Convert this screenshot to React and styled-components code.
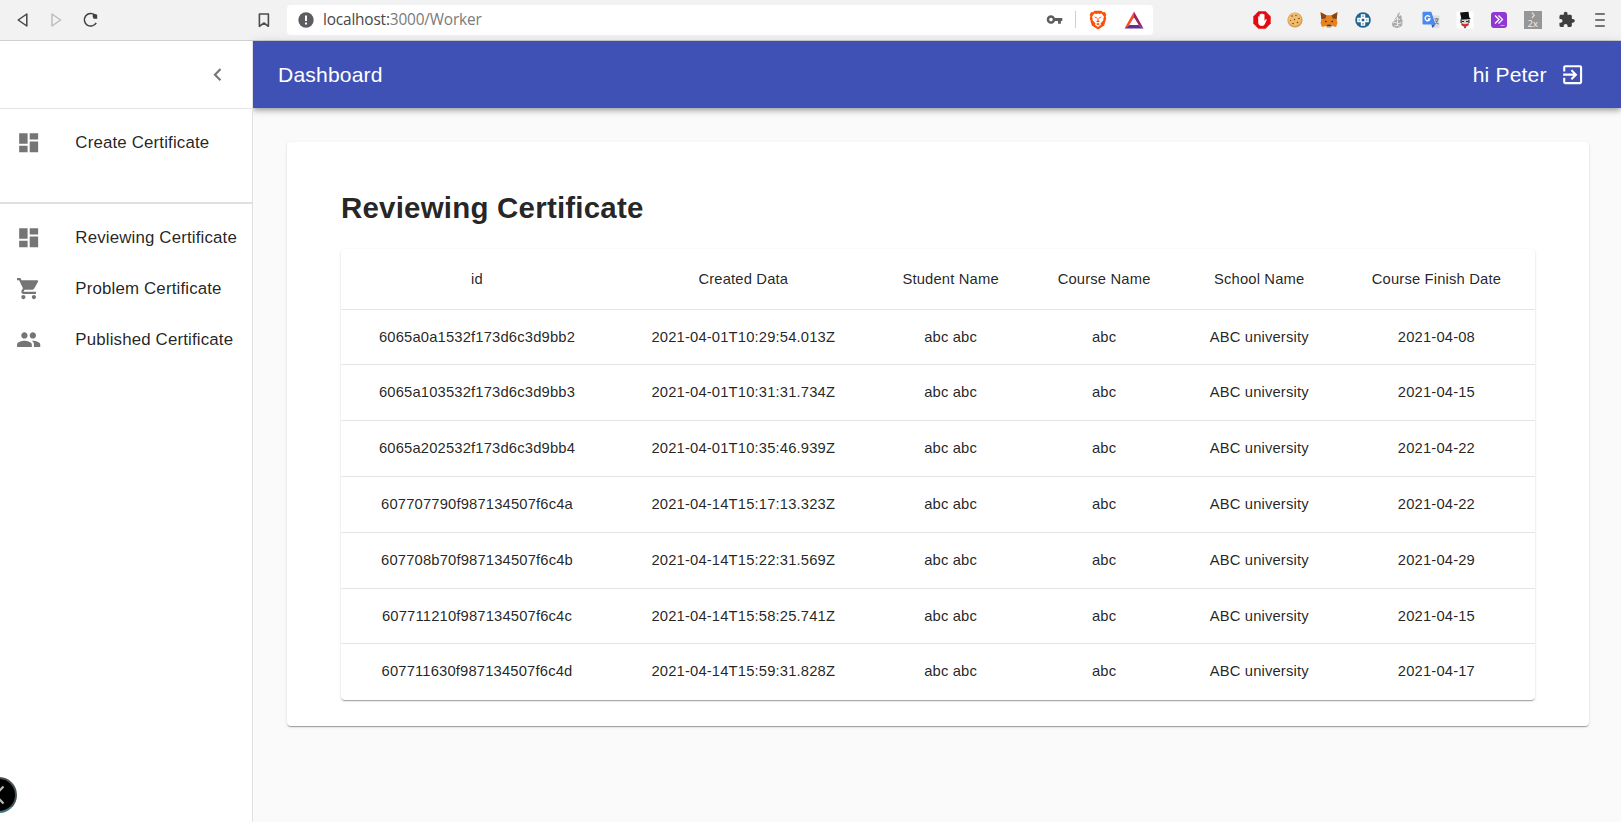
import React from "react";
import styled, { createGlobalStyle } from "styled-components";

const Global = createGlobalStyle`
  * { box-sizing: border-box; }
  html, body, #root { height: 100%; }
  body {
    margin: 0;
    overflow: hidden;
    background: #fafafa;
    color: rgba(0, 0, 0, 0.87);
    font-family: "Liberation Sans", Arial, sans-serif;
  }
`;

const Page = styled.div`
  display: flex;
  flex-direction: column;
  height: 100vh;
`;

const BrowserBar = styled.header`
  display: flex;
  align-items: center;
  flex: none;
  height: 41px;
  padding: 0 12px 1px 14px;
  background: #f2f2f2;
  border-bottom: 1px solid #cfd1d3;
`;

const NavButtons = styled.div`
  display: flex;
  gap: 16px;
`;

const Icon = styled.svg`
  display: block;
  flex: none;
  width: ${(p) => p.$size || 18}px;
  height: ${(p) => p.$size || 18}px;
  fill: ${(p) => p.$color || "currentColor"};
`;

const BookmarkSlot = styled.div`
  margin-left: 155px;
`;

const AddressBar = styled.div`
  display: flex;
  align-items: center;
  width: 866px;
  height: 30px;
  margin-left: 14px;
  padding: 0 9px 0 10px;
  background: #fff;
  border-radius: 4px;
`;

const Url = styled.span`
  flex: 1;
  margin-left: 8px;
  font: 15.4px/20px "Open Sans", "Noto Sans", sans-serif;
  letter-spacing: -0.17px;
  color: #7b7b7b;
`;

const Host = styled.span`
  color: #474747;
`;

const BarDivider = styled.span`
  width: 1px;
  height: 17px;
  margin: 0 12px 0 12px;
  background: #cfcfcf;
`;

const ShieldSlot = styled.div`
  margin-right: 16px;
`;

const Extensions = styled.div`
  display: flex;
  align-items: center;
  gap: 15.9px;
  margin-left: auto;
`;

const Body = styled.div`
  display: flex;
  flex: 1;
  min-height: 0;
`;

const Sidebar = styled.nav`
  position: relative;
  flex: none;
  width: 253px;
  background: #fff;
  border-right: 1px solid #e0e0e0;
`;

const SidebarHead = styled.div`
  display: flex;
  align-items: center;
  justify-content: flex-end;
  height: 68px;
  padding-right: 22px;
  border-bottom: 1px solid #e3e3e3;
  color: #757575;
`;

const NavList = styled.ul`
  margin: 0;
  padding: 8.5px 0;
  height: ${(p) => p.$height || "auto"};
  list-style: none;
  border-bottom: ${(p) => (p.$ruled ? "2px solid #e0e0e0" : "0")};
`;

const NavItem = styled.li`
  display: flex;
  align-items: center;
  height: 50.75px;
  padding-left: 16px;
  color: #757575;
`;

const NavLabel = styled.span`
  margin-left: 34px;
  padding-top: 1px;
  font-size: 16.87px;
  letter-spacing: 0.00938em;
  white-space: nowrap;
  color: rgba(0, 0, 0, 0.87);
`;

const FloatingToggle = styled.div`
  position: absolute;
  left: -19px;
  bottom: 9px;
  display: flex;
  align-items: center;
  justify-content: center;
  width: 36px;
  height: 36px;
  border: 2px solid;
  border-color: #4b4d50 #48545a #3f7683 #333;
  border-radius: 50%;
  background: #000;
  color: #b5b5b5;
`;

const Main = styled.main`
  display: flex;
  flex-direction: column;
  flex: 1;
  min-width: 0;
`;

const AppBar = styled.div`
  display: flex;
  align-items: center;
  flex: none;
  height: 67px;
  padding: 0 36px 0 25px;
  background: #3f51b5;
  color: #fff;
  box-shadow: 0 2px 4px -1px rgba(0, 0, 0, 0.2), 0 4px 5px 0 rgba(0, 0, 0, 0.14),
    0 1px 10px 0 rgba(0, 0, 0, 0.12);
`;

const BarText = styled.span`
  flex: ${(p) => (p.$grow ? 1 : "none")};
  font-size: 21.1px;
  letter-spacing: 0.0075em;
`;

const LogoutSlot = styled.div`
  margin-left: 13px;
`;

const Card = styled.section`
  margin: 34px 32px 0 34px;
  padding: 44px 54px 25.5px;
  background: #fff;
  border-radius: 4px;
  box-shadow: 0 2px 1px -1px rgba(0, 0, 0, 0.2), 0 1px 1px 0 rgba(0, 0, 0, 0.14),
    0 1px 3px 0 rgba(0, 0, 0, 0.12);
`;

const Title = styled.h1`
  margin: 0 0 19px;
  font-size: 29.5px;
  line-height: 44px;
  letter-spacing: 0.2px;
`;

const TablePaper = styled.div`
  border-radius: 4px;
  box-shadow: 0 2px 1px -1px rgba(0, 0, 0, 0.2), 0 1px 1px 0 rgba(0, 0, 0, 0.14),
    0 1px 3px 0 rgba(0, 0, 0, 0.12);
`;

const Row = styled.div`
  display: grid;
  grid-template-columns: 272fr 260.6fr 154fr 153fr 157.2fr 197.2fr;
  align-items: center;
  height: ${(p) => (p.$head ? 60.5 : 55.83)}px;
  padding-bottom: ${(p) => (p.$head ? 0 : 0.8)}px;
  border-bottom: 1px solid ${(p) => (p.$last ? "transparent" : "#e4e4e4")};
  font-size: 14.78px;
  font-weight: 400;
  letter-spacing: 0.011em;
  text-align: center;
  white-space: nowrap;
`;

const P = {
  dashboard: "M3 13h8V3H3v10zm0 8h8v-6H3v6zm10 0h8V11h-8v10zm0-18v6h8V3h-8z",
  cart: "M7 18c-1.1 0-1.99.9-1.99 2S5.9 22 7 22s2-.9 2-2-.9-2-2-2zM1 2v2h2l3.6 7.59-1.35 2.45c-.16.28-.25.61-.25.96 0 1.1.9 2 2 2h12v-2H7.42c-.14 0-.25-.11-.25-.25l.03-.12.9-1.63h7.45c.75 0 1.41-.41 1.75-1.03l3.58-6.49c.08-.14.12-.31.12-.48 0-.55-.45-1-1-1H5.21l-.94-2H1zm16 16c-1.1 0-1.99.9-1.99 2s.89 2 1.99 2 2-.9 2-2-.9-2-2-2z",
  people: "M16 11c1.66 0 2.99-1.34 2.99-3S17.66 5 16 5c-1.66 0-3 1.34-3 3s1.34 3 3 3zm-8 0c1.66 0 2.99-1.34 2.99-3S9.66 5 8 5C6.34 5 5 6.34 5 8s1.34 3 3 3zm0 2c-2.33 0-7 1.17-7 3.5V19h14v-2.5c0-2.33-4.67-3.5-7-3.5zm8 0c-.29 0-.62.02-.97.05 1.16.84 1.97 1.97 1.97 3.45V19h6v-2.5c0-2.33-4.67-3.5-7-3.5z",
  left: "M15.41 7.41L14 6l-6 6 6 6 1.41-1.41L10.83 12z",
  exit: "M10.09 15.59L11.5 17l5-5-5-5-1.41 1.41L12.67 11H3v2h9.67l-2.58 2.59zM19 3H5c-1.11 0-2 .9-2 2v4h2V5h14v14H5v-4H3v4c0 1.1.89 2 2 2h14c1.1 0 2-.9 2-2V5c0-1.1-.9-2-2-2z",
  puzzle: "M20.5 11H19V7c0-1.1-.9-2-2-2h-4V3.5C13 2.12 11.88 1 10.5 1S8 2.12 8 3.5V5H4c-1.1 0-1.99.9-1.99 2v3.8H3.5c1.49 0 2.7 1.21 2.7 2.7s-1.21 2.7-2.7 2.7H2V20c0 1.1.9 2 2 2h3.8v-1.5c0-1.49 1.21-2.7 2.7-2.7 1.49 0 2.7 1.21 2.7 2.7V22H17c1.1 0 2-.9 2-2v-4h1.5c1.38 0 2.5-1.12 2.5-2.5S21.88 11 20.5 11z",
  key: "M12.65 10C11.83 7.67 9.61 6 7 6c-3.31 0-6 2.69-6 6s2.69 6 6 6c2.61 0 4.83-1.67 5.65-4H17v4h4v-4h2v-4H12.65zM7 14.5c-1.38 0-2.5-1.12-2.5-2.5s1.12-2.5 2.5-2.5 2.5 1.12 2.5 2.5-1.12 2.5-2.5 2.5z",
};

const Mui = ({ d, size = 25.3, color }) => (
  <Icon viewBox="0 0 24 24" $size={size} $color={color}><path d={d} /></Icon>
);

const SpeedBox = styled.span`
  display: flex;
  flex-direction: column;
  align-items: center;
  justify-content: space-between;
  width: 18px;
  height: 18px;
  background: #969696;
  color: #f0f0f0;
  font: 9.5px/10px "Open Sans", sans-serif;
`;

const SpeedIcon = () => (
  <SpeedBox>
    <Icon viewBox="0 0 8 8" $size={8}><path fill="none" stroke="#ddd" strokeWidth="1.2" d="m2.8 1.5 2.5 2.7L2.8 7" /></Icon>
    2x
  </SpeedBox>
);

const ExtensionIcons = () => (
  <Extensions>
    <Icon viewBox="0 0 18 18">
      <path fill="#e30b12" d="M5.4.3h7.2l5.1 5.1v7.2l-5.1 5.1H5.4L.3 12.6V5.4z" />
      <path fill="#fff" d="M5.2 6q0-.8.7-.8t.7.8V3.900q0-.8.8-.8t.8.800V3.200q0-.8.85-.8t.85.8v.7q0-.8.800-.8t.8.800v6l1-1.400q.7-.7 1.400 0L11.900 13q-.9 1.900-3 1.900-3.700 0-3.700-3.900z" />
    </Icon>
    <Icon viewBox="0 0 18 18">
      <circle cx="9" cy="9" r="7.6" fill="#d99a4c" />
      <circle cx="8.7" cy="8.4" r="6.6" fill="#efbd70" />
      <g fill="#70411e">
        <circle cx="6" cy="5" r=".8" /><circle cx="10" cy="4.500" r=".7" /><circle cx="13" cy="7.500" r=".8" />
        <circle cx="8.500" cy="8.500" r=".7" /><circle cx="4.500" cy="9.500" r=".6" /><circle cx="11.500" cy="11.500" r=".8" /><circle cx="7" cy="12.500" r=".8" />
      </g>
    </Icon>
    <Icon viewBox="0 0 18 18">
      <path fill="#e8821e" d="M.6 1.300 6.500 4.300h5L17.400 1.300 16.700 8l.7 4-1.300 4-3.800-1-1.500 1.500H7.200L5.700 15l-3.800 1-1.300-4 .7-4z" />
      <path fill="#85451d" d="M.6 1.300 6.500 4.500 5.300 7.500 1.300 8zM17.400 1.300l-5.900 3.200 1.200 3 4 .5z" />
      <path fill="#273547" d="m4.700 9.500 2.600 1-1.800.9zm8.600 0-2.600 1 1.800.9zM7.300 13.700h3.400l.3 2H7z" />
      <path fill="#c9bcb1" d="M6.600 15.300h4.800l-1 1.500H7.600z" />
    </Icon>
    <Icon viewBox="0 0 18 18">
      <circle cx="9" cy="9" r="7.8" fill="#1e668f" />
      <path fill="#fff" d="M6.800 3.200h4.400v3.600h3.600v4.400h-3.600v3.600H6.800v-3.600H3.200V6.800h3.600z" />
      <path fill="#1e668f" d="M7.700 7.700h2.600v2.600H7.700zM8.400 4.600h1.200v1.200H8.400zm0 7.600h1.200v1.200H8.400zM4.600 8.400h1.200v1.200H4.600zm7.600 0h1.200v1.200h-1.200z" />
    </Icon>
    <Icon viewBox="0 0 18 18">
      <path fill="#aaa" d="M11.500 1q.7 2.500-1.200 4.500l2.200-1.300q2 1 .8 3.200 2 1.500 1.100 4.200.5 4.700-5.200 5.400-5.500-.5-5.200-4 .1-2.500 2.300-3Q6.500 7 8.800 5.800 9 3 11.500 1z" />
      <path fill="none" stroke="#eee" strokeWidth=".9" d="M7 8.500q2.500-2 5 .2M5 12q2-1.800 4 0t4.500-.5M6.500 15q2.500-1.500 5 .2M9.500 6v8" />
    </Icon>
    <Icon viewBox="0 0 18 18">
      <path fill="#dedede" d="M7 4.500h9.500q1 0 1 1v10.500q0 1-1 1H11z" />
      <path fill="#4989f4" d="M1.500.7h7.800L13.500 13.500h-12q-1 0-1-1V1.700q0-1 1-1z" />
      <path fill="#3355cb" d="m9.300 13.500 4.200 0-3 3.500z" />
      <path fill="none" stroke="#fff" strokeWidth="1.300" d="M7.800 6A2.500 2.500 0 1 0 8 8H5.900" />
      <path fill="none" stroke="#687b82" strokeWidth="1.100" d="M12.500 8h4.200m-2.200-1v1m1.500 0q-.8 3.500-2.800 5.200M13.500 9.500q1.300 2.500 3 3.800" />
    </Icon>
    <Icon viewBox="0 0 18 18">
      <path fill="#fff" d="M.5.5h17v17H.5z" />
      <path fill="#111" d="m4 1.500 8.500-.8.8 6 1 .2v1.300L4.500 8.800V7.700l.8-.3z" />
      <path fill="#d6d2ce" d="M5.500 9h7v4h-7z" />
      <path fill="#222" d="M4.500 9h1.200v3H4.500zm7.800 0h1.200v3h-1.200zM6 10h2v1H6zm4 0h2v1h-2z" />
      <path fill="#d7232c" d="m4.800 12.200 4.200 1.100 4.200-1.100-.9 2.400L9 16l-3.300-1.400z" />
      <path fill="#222" d="m7.500 15.400 1.500.6 1.500-.6L9 17.500z" />
    </Icon>
    <Icon viewBox="0 0 18 18">
      <rect x="1" y="1" width="16" height="16" rx="3" fill="#9138d3" />
      <path fill="none" stroke="#fff" strokeWidth="1.300" d="m5 4.500 4 4-4 4M8.500 4.500l4 4-4 4" />
      <path stroke="#d89bf1" d="M10.500 14.500h4" />
    </Icon>
    <SpeedIcon />
    <Mui d={P.puzzle} size={17.5} color="#3f3f3f" />
    <Icon viewBox="0 0 18 18"><path fill="none" stroke="#4e4e4e" strokeWidth="1.4" strokeLinecap="round" d="M4.700 3h8.600M4.700 9h8.600M4.700 15h8.600" /></Icon>
  </Extensions>
);

const rows = [
  ["6065a0a1532f173d6c3d9bb2", "2021-04-01T10:29:54.013Z", "2021-04-08"],
  ["6065a103532f173d6c3d9bb3", "2021-04-01T10:31:31.734Z", "2021-04-15"],
  ["6065a202532f173d6c3d9bb4", "2021-04-01T10:35:46.939Z", "2021-04-22"],
  ["607707790f987134507f6c4a", "2021-04-14T15:17:13.323Z", "2021-04-22"],
  ["607708b70f987134507f6c4b", "2021-04-14T15:22:31.569Z", "2021-04-29"],
  ["607711210f987134507f6c4c", "2021-04-14T15:58:25.741Z", "2021-04-15"],
  ["607711630f987134507f6c4d", "2021-04-14T15:59:31.828Z", "2021-04-17"],
];
const headings = ["id", "Created Data", "Student Name", "Course Name", "School Name", "Course Finish Date"];
const reviewLinks = [
  ["dashboard", "Reviewing Certificate"],
  ["cart", "Problem Certificate"],
  ["people", "Published Certificate"],
];

export default function App() {
  return (
    <Page>
      <Global />
      <BrowserBar>
        <NavButtons>
          <Icon viewBox="0 0 18 18"><path fill="none" stroke="#454545" strokeWidth="1.500" strokeLinejoin="round" d="M12.800 3v12L4.200 9z" /></Icon>
          <Icon viewBox="0 0 18 18"><path fill="none" stroke="#bcbcbc" strokeWidth="1.400" strokeLinejoin="round" d="M4 3v12l8.600-6z" /></Icon>
          <Icon viewBox="0 0 18 18">
            <path fill="none" stroke="#404040" strokeWidth="1.500" d="M12.800 4A6.300 6.300 0 1 0 14.200 11.800" />
            <path fill="#404040" d="M10.500 4.700q1.200-2.600 3.200-1.500l1.500.5v4h-3.700z" />
          </Icon>
        </NavButtons>
        <BookmarkSlot>
          <Icon viewBox="0 0 18 18"><path fill="none" stroke="#4c4c4c" strokeWidth="1.600" strokeLinejoin="round" d="M4.400 3h9v12.300L9 12l-4.600 3.300z" /></Icon>
        </BookmarkSlot>
        <AddressBar>
          <Icon viewBox="0 0 18 18">
            <circle cx="9" cy="9" r="7.700" fill="#5b5d60" />
            <path fill="#fff" d="M8 4.500h2V10H8zM8 11.500h2v2H8z" />
          </Icon>
          <Url><Host>localhost:</Host>3000/Worker</Url>
          <Mui d={P.key} size={17} color="#5b5d60" />
          <BarDivider />
          <ShieldSlot>
            <Icon viewBox="0 0 18 20" $size={20}>
              <path fill="#fb5007" d="M5.500.7h7l1.500 1.500 1.700-.2 1.600 2.500-.6 1.700.5 2-2 7.200L9 19.500 2.800 15.400l-2-7.200.5-2-.6-1.700L2.300 2l1.700.2z" />
              <path fill="#fff" d="m5.300 3.500 2.200.5L9 3.600l1.500.4 2.200-.5 2.300 3.200-.8 2.300.3 1-3 3.400.5 1.400L9 17l-3-2.200.5-1.400-3-3.400.3-1L3 6.700z" />
              <path fill="#fb5007" d="m5 6.600 2.800.6-.4 1.600zm8 0-2.800.6.4 1.600zM8.500 8h1v2.500l1.500.8-2 1.200-2-1.200 1.500-.8zM7 14l2-1 2 1-2 1.300z" />
            </Icon>
          </ShieldSlot>
          <Icon viewBox="0 0 20 20" $size={20}>
            <path fill="#ff4724" d="M10 1.500v5.700L5.300 15 .5 18.500z" />
            <path fill="#9e1f63" d="M10 1.500v5.700l4.700 7.800 4.800 3.500z" />
            <path fill="#662d91" d="M5.300 15h9.400l4.800 3.500H.5z" />
          </Icon>
        </AddressBar>
        <ExtensionIcons />
      </BrowserBar>
      <Body>
        <Sidebar>
          <SidebarHead><Mui d={P.left} /></SidebarHead>
          <NavList $ruled $height="95px">
            <NavItem><Mui d={P.dashboard} /><NavLabel>Create Certificate</NavLabel></NavItem>
          </NavList>
          <NavList>
            {reviewLinks.map(([icon, label]) => (
              <NavItem key={label}><Mui d={P[icon]} /><NavLabel>{label}</NavLabel></NavItem>
            ))}
          </NavList>
          <FloatingToggle>
            <Icon viewBox="0 0 32 32" $size={32}><path fill="none" stroke="#b8b8b8" strokeWidth="2.200" d="m20.500 7.500-8 8.500 8 8.500" /></Icon>
          </FloatingToggle>
        </Sidebar>
        <Main>
          <AppBar>
            <BarText $grow>Dashboard</BarText>
            <BarText>hi Peter</BarText>
            <LogoutSlot><Mui d={P.exit} /></LogoutSlot>
          </AppBar>
          <Card>
            <Title>Reviewing Certificate</Title>
            <TablePaper role="table">
              <Row $head role="row">
                {headings.map((h) => <span role="columnheader" key={h}>{h}</span>)}
              </Row>
              {rows.map(([id, created, finish], i) => (
                <Row key={id} role="row" $last={i === rows.length - 1}>
                  {[id, created, "abc abc", "abc", "ABC university", finish].map((v, c) => (
                    <span role="cell" key={c}>{v}</span>
                  ))}
                </Row>
              ))}
            </TablePaper>
          </Card>
        </Main>
      </Body>
    </Page>
  );
}
